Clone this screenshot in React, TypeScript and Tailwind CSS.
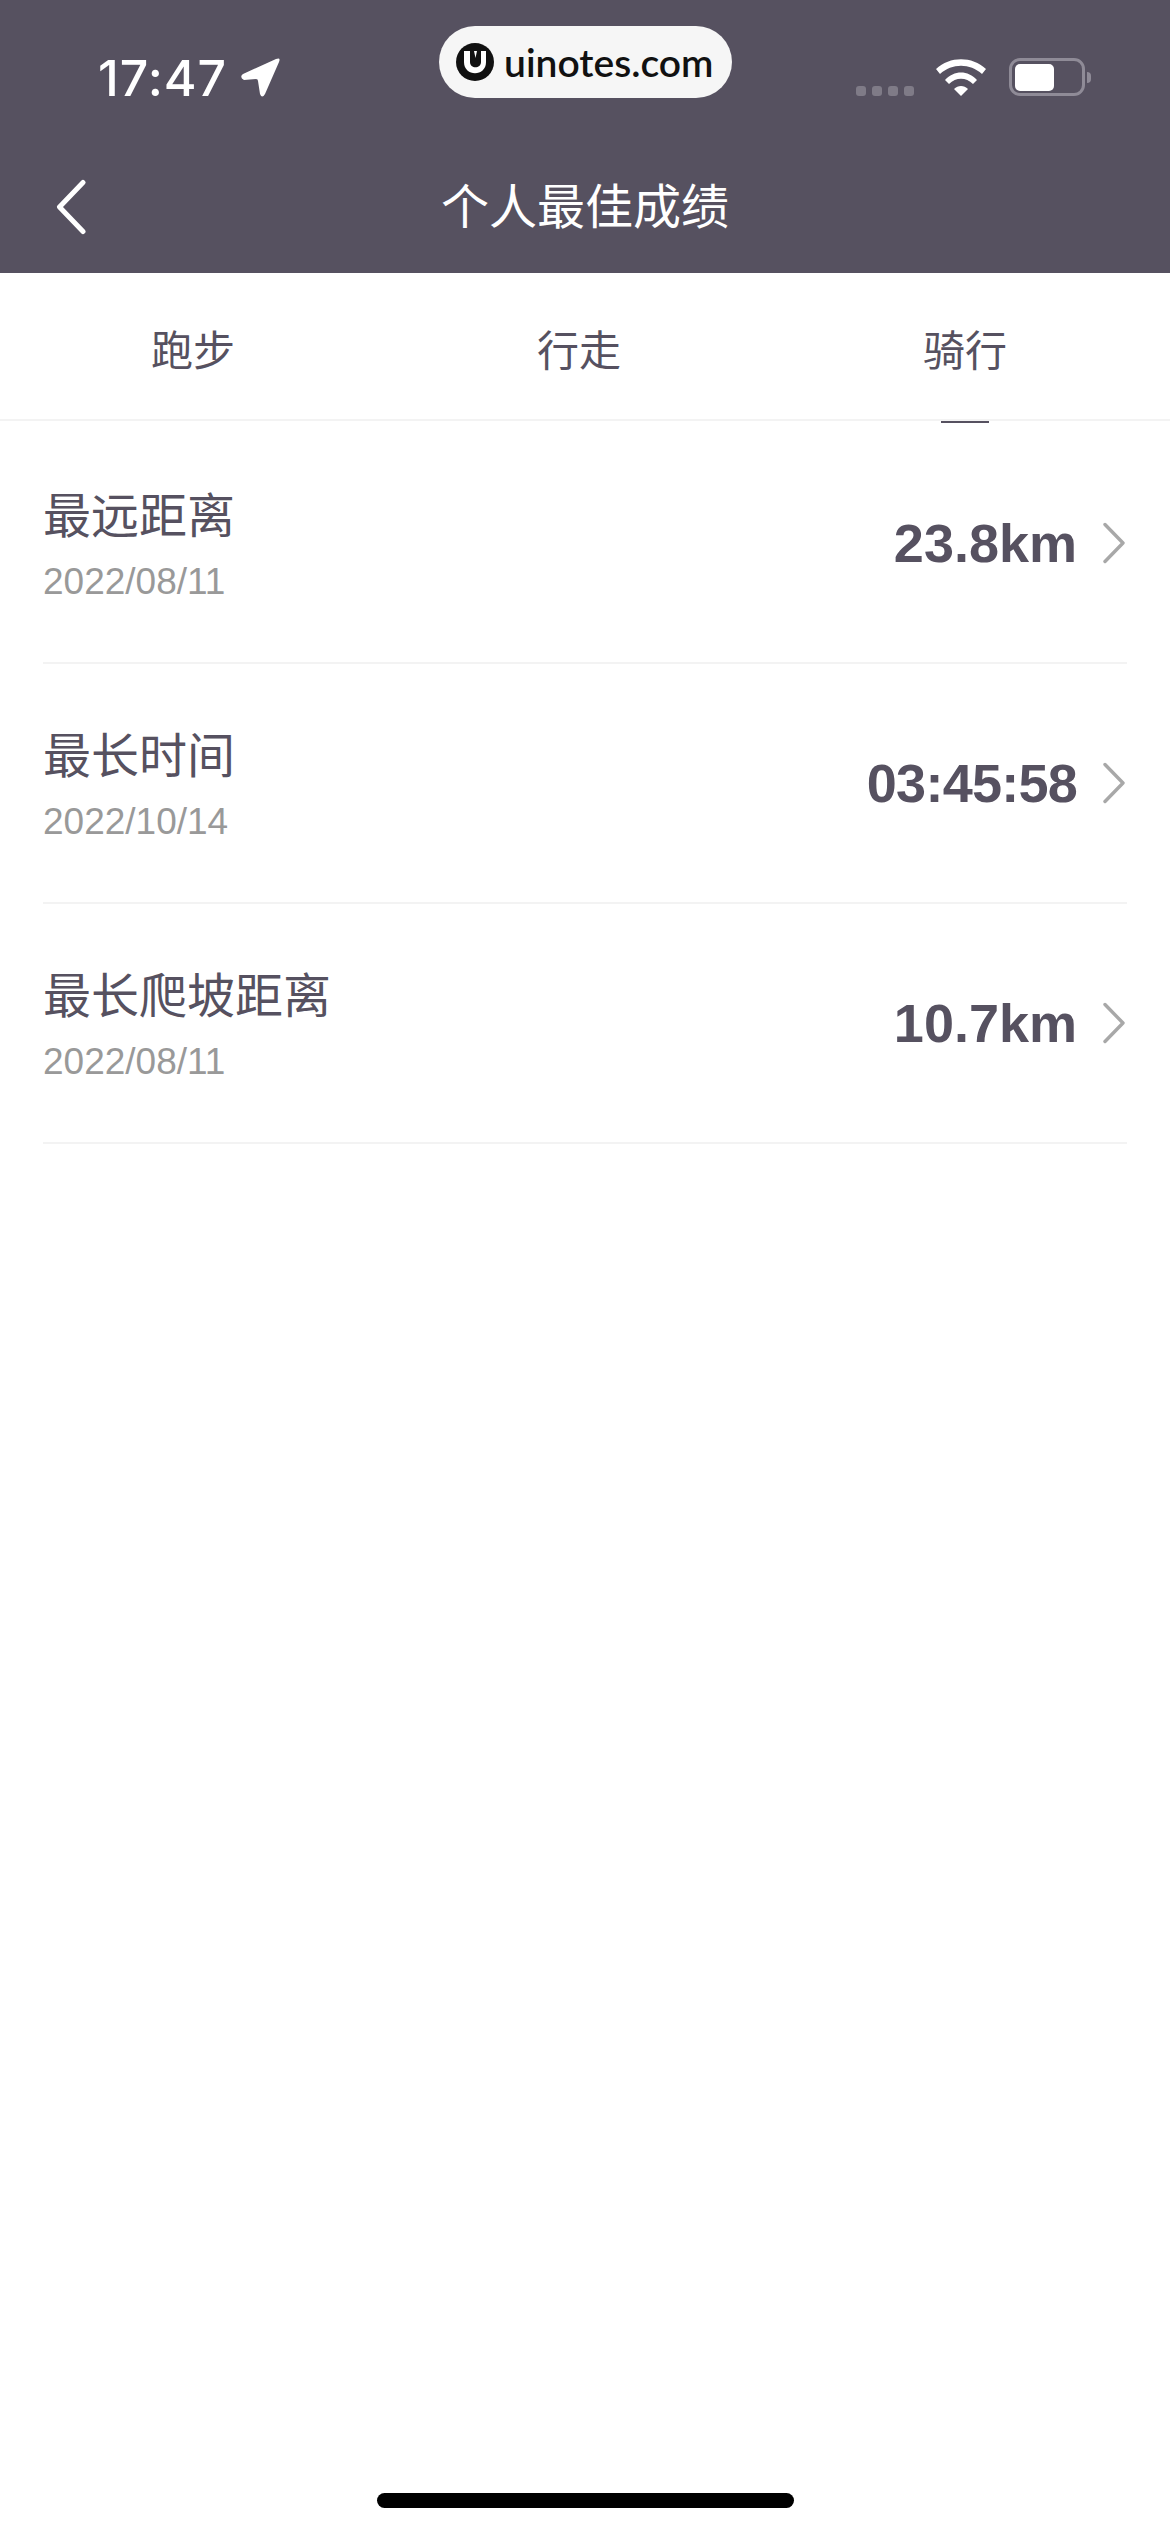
const CJK = "font-['Liberation_Sans','Noto_Sans_CJK_SC',sans-serif]";

const rows = [
  { title: "最远距离", date: "2022/08/11", value: "23.8km", valueClass: "tracking-[0px]" },
  { title: "最长时间", date: "2022/10/14", value: "03:45:58", valueClass: "tracking-[-0.75px]" },
  { title: "最长爬坡距离", date: "2022/08/11", value: "10.7km", valueClass: "tracking-[0px]" },
];

function Row({ title, date, value, valueClass }: { title: string; date: string; value: string; valueClass: string }) {
  return (
    <div className="mx-[43px] flex h-[240px] items-center justify-between border-b-2 border-[#f3f3f3]">
      <div className="flex flex-col pt-[4px]">
        <span className="text-[48px] leading-[60px] text-[#565160]">{title}</span>
        <span className="mt-[13px] text-[37px] leading-[44px] text-[#999999]">{date}</span>
      </div>
      <div className="flex items-center gap-[26px]">
        <span className={`text-[54px] leading-[64px] font-bold text-[#565160] ${valueClass}`}>{value}</span>
        <svg width="24" height="42" viewBox="0 0 24 42" fill="none">
          <path d="M2 2.5 L20 21 L2 39.5" stroke="#a8a8a8" strokeWidth="3.4" strokeLinecap="round" strokeLinejoin="round" />
        </svg>
      </div>
    </div>
  );
}

function Dot() {
  return <span className="h-[10px] w-[10px] rounded-[3px] bg-[#7f7b87]" />;
}

export default function App() {
  return (
    <div className={`flex h-[2532px] w-[1170px] flex-col bg-white ${CJK}`}>
      <header className="relative h-[273px] bg-[#565160]">
        <div className="flex h-[158px] items-start justify-between pt-[50px] pr-[79px] pl-[98px]">
          <div className="flex items-center gap-[14px]">
            <span className="font-['Inter',sans-serif] text-[50px] leading-[56px] font-medium tracking-[1px] text-white">17:47</span>
            <svg width="40" height="40" viewBox="0 0 40 40" fill="none">
              <path d="M2 16 L35 1 Q40 -1 38 4 L24 36 Q21 41 19 36 L17 23 Q17 21 15 21 L3 22 Q-2 19 2 16 Z" fill="white" />
            </svg>
          </div>
          <div className="mt-[8px] flex items-end">
            <div className="mr-[22px] flex gap-[6px]">
              <Dot />
              <Dot />
              <Dot />
              <Dot />
            </div>
            <svg width="50" height="37" viewBox="0 0 50 37" fill="white" className="mr-[23px]">
              <path d="M0 10 C14 -3 36 -3 50 10 L46 15 C34 4 16 4 4 15 Z" />
              <path d="M9 21 C18 11 32 11 41 21 L37 25 C30 18 20 18 13 25 Z" />
              <path d="M18 30 C22 26 28 26 32 30 L25 37 Z" />
            </svg>
            <div className="flex items-center gap-[2px]">
              <div className="flex h-[38px] w-[76px] items-center rounded-[11px] border-[3px] border-[#8f8b97] px-[3px]">
                <div className="h-[27px] w-[39px] rounded-[5px] bg-white" />
              </div>
              <div className="h-[11px] w-[4px] rounded-r-[4px] bg-[#8f8b97]" />
            </div>
          </div>
        </div>
        <div className="grid h-[100px] grid-cols-[1fr_auto_1fr] items-center">
          <svg width="36" height="56" viewBox="0 0 36 56" fill="none" className="mb-[3px] ml-[52px]">
            <path d="M31 3.5 L7.5 28 L31 52.5" stroke="white" strokeWidth="5" strokeLinecap="round" strokeLinejoin="round" />
          </svg>
          <h1 className="text-[48px] leading-[60px] font-normal text-white">个人最佳成绩</h1>
          <span />
        </div>
        <div className="absolute top-[26px] left-[439px] flex h-[72px] w-[293px] items-center gap-[10px] rounded-full bg-[#f6f6f6] pl-[17px]">
          <svg width="38" height="38" viewBox="0 0 38 38" fill="none">
            <circle cx="19" cy="19" r="19" fill="#111111" />
            <path d="M8 8 H30 V19 C30 34 8 34 8 19 Z" fill="white" />
            <path d="M14 8 H18 L19.5 15 L21 8 H25 V19 C25 26 14 26 14 19 Z" fill="#111111" />
          </svg>
          <span className="font-['Lato',sans-serif] text-[39px] leading-[44px] font-semibold text-[#111111]">uinotes.com</span>
        </div>
      </header>

      <nav className="grid h-[148px] grid-cols-3 border-b-2 border-[#f3f3f3] pt-[10px] pr-[12px] text-[42px] text-[#565160]">
        <div className="flex items-center justify-center">跑步</div>
        <div className="flex items-center justify-center">行走</div>
        <div className="relative flex items-center justify-center">
          骑行
          <span className="absolute bottom-[-4px] left-[169px] h-[2px] w-[48px] bg-[#565160]" />
        </div>
      </nav>

      <main className="flex-1 pt-[3px]">
        {rows.map((r) => (
          <Row key={r.title} {...r} />
        ))}
      </main>

      <div className="flex justify-center pb-[24px]">
        <div className="h-[15px] w-[417px] rounded-full bg-black" />
      </div>
    </div>
  );
}
